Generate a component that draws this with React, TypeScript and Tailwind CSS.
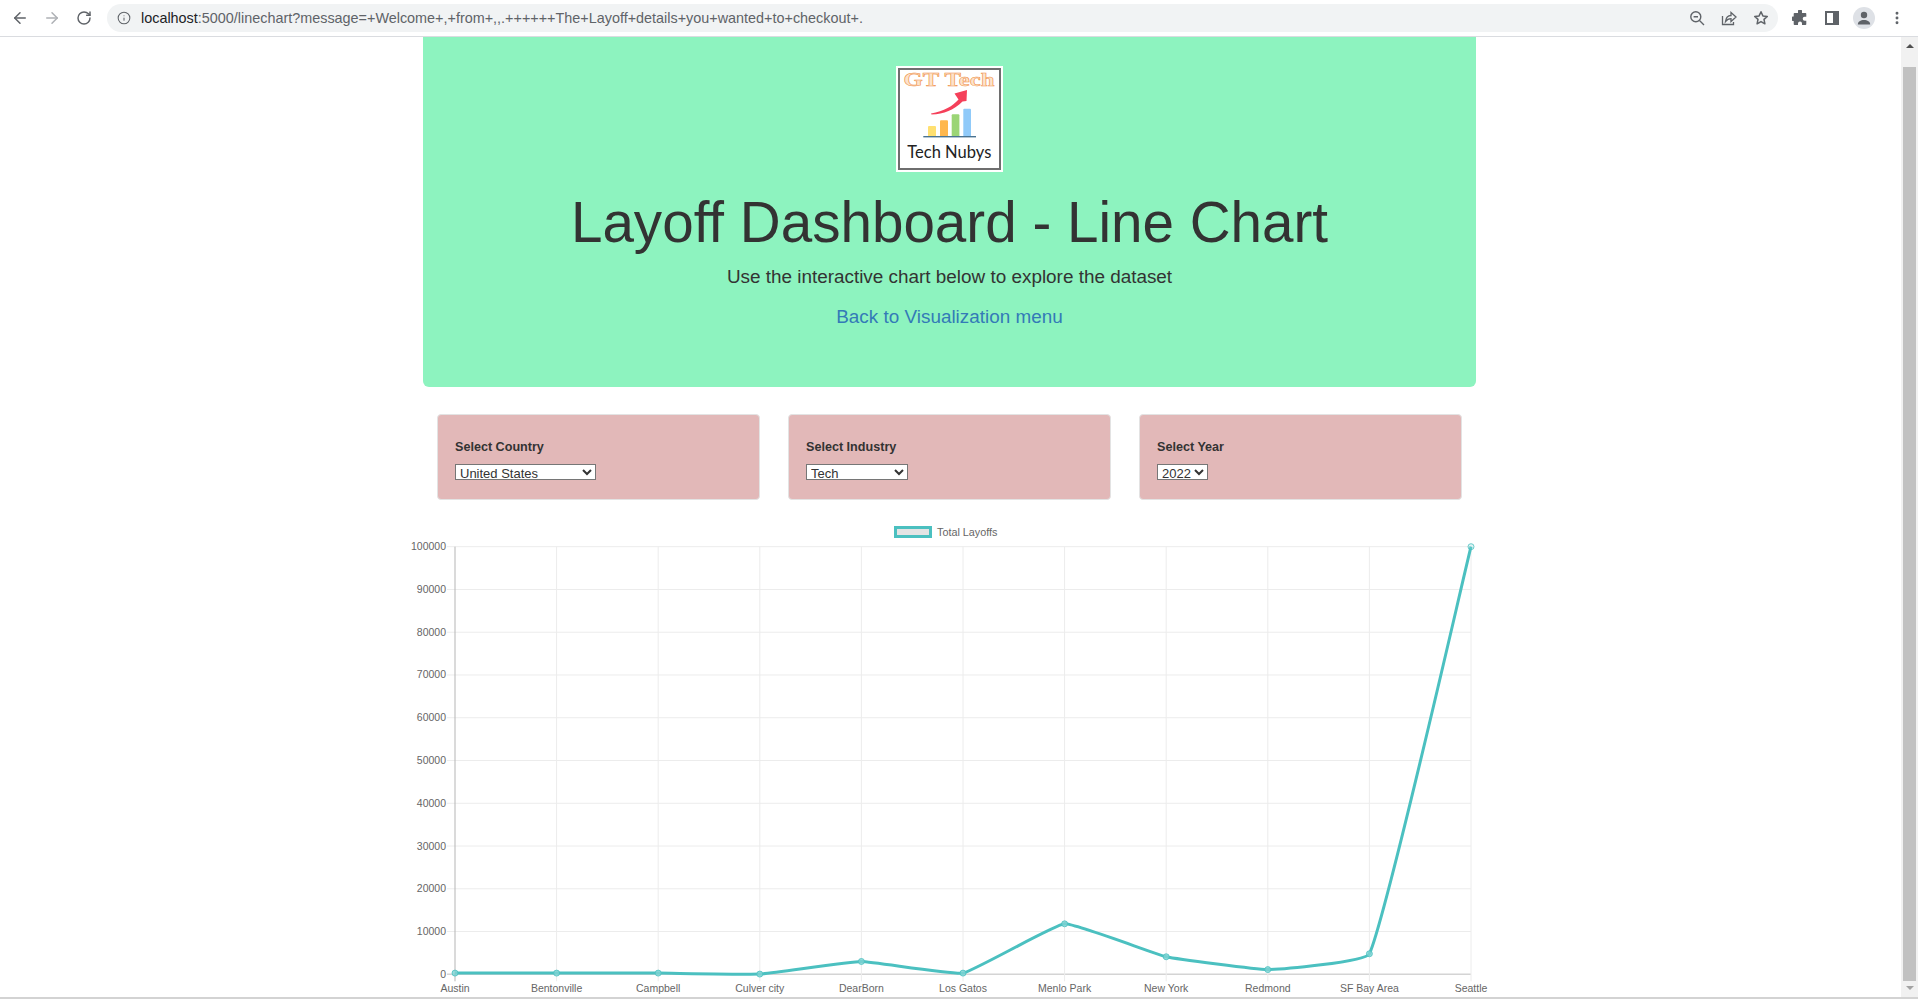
import React from "react";
import { ArrowLeft, ArrowRight, RotateCw, Info, MoreVertical } from "lucide-react";

const labels = ["Austin","Bentonville","Campbell","Culver city","DearBorn","Los Gatos","Menlo Park","New York","Redmond","SF Bay Area","Seattle"];
const values = [280,280,280,50,3000,280,11800,4100,1100,4800,100000];
const X0 = 455, X1 = 1471, Y0 = 974.3, Y1 = 546.7, LEFT = 400, TOP = 515;
const px = (i: number) => X0 + (i * (X1 - X0)) / 10 - LEFT;
const py = (v: number) => Y0 - (v / 100000) * (Y0 - Y1) - TOP;

function spline() {
  const pts = values.map((v, i) => ({ x: px(i), y: py(v) }));
  const t = 0.1;
  const ctrl = pts.map((p, i) => {
    const a = pts[Math.max(i - 1, 0)];
    const b = pts[Math.min(i + 1, pts.length - 1)];
    const d1 = Math.hypot(p.x - a.x, p.y - a.y);
    const d2 = Math.hypot(b.x - p.x, b.y - p.y);
    const s = d1 + d2 || 1;
    const f1 = (d1 / s) * t;
    const f2 = (d2 / s) * t;
    return {
      px: p.x - f1 * (b.x - a.x),
      py: p.y - f1 * (b.y - a.y),
      nx: p.x + f2 * (b.x - a.x),
      ny: p.y + f2 * (b.y - a.y),
    };
  });
  let d = `M${pts[0].x} ${pts[0].y}`;
  for (let i = 1; i < pts.length; i++) {
    d += ` C${ctrl[i - 1].nx} ${ctrl[i - 1].ny} ${ctrl[i].px} ${ctrl[i].py} ${pts[i].x} ${pts[i].y}`;
  }
  return { d, pts };
}

function Chart() {
  const { d, pts } = spline();
  return (
    <svg width="1100" height="484" className="block" style={{ fontFamily: '"Liberation Sans", Arial, sans-serif' }}>
      <rect x="495.5" y="12.5" width="35" height="9" fill="#e4e4e4" stroke="#4bc0c0" strokeWidth="3" />
      <text x="537" y="20.5" fontSize="10.8" fill="#666">Total Layoffs</text>
      {Array.from({ length: 11 }).map((_, i) => {
        const y = py(i * 10000);
        return (
          <g key={i}>
            <line x1={X0 - LEFT - 8} x2={X1 - LEFT} y1={y} y2={y} stroke={i === 0 ? "#d4d4d4" : "#ececec"} strokeWidth={i === 0 ? 1.5 : 1} />
            <text x={X0 - LEFT - 9} y={y + 3.5} textAnchor="end" fontSize="10.5" fill="#666">{i * 10000}</text>
          </g>
        );
      })}
      {labels.map((l, i) => (
        <g key={l}>
          <line x1={px(i)} x2={px(i)} y1={py(100000)} y2={py(0) + 7} stroke={i === 0 ? "#b5b5b5" : "#ececec"} />
          <text x={px(i)} y={py(0) + 17.5} textAnchor="middle" fontSize="10.5" fill="#666">{l}</text>
        </g>
      ))}
      <path d={d} fill="none" stroke="#4bc0c0" strokeWidth="3" />
      {pts.map((p, i) => (
        <circle key={i} cx={p.x} cy={p.y} r="3" fill="#7fd3d3" fillOpacity={i === 10 ? 0.25 : 0.8} stroke="#4bc0c0" strokeOpacity="0.8" strokeWidth="1" />
      ))}
    </svg>
  );
}

function Logo() {
  return (
    <div className="w-[107px] h-[106px] bg-white p-[2px] shrink-0">
      <svg width="103" height="102" viewBox="0 0 103 102" className="block">
        <rect x="1" y="1" width="101" height="100" fill="#fff" stroke="#6e6e6e" strokeWidth="2" />
        <text x="5.5" y="18" fontSize="19" fill="#fde3cb" stroke="#ef8f45" strokeWidth="0.5" textLength="91" lengthAdjust="spacingAndGlyphs" style={{ fontFamily: '"Liberation Serif", serif', fontWeight: 700 }}>GT Tech</text>
        <path d="M33 45.5 C46 43 55 38 60.5 31.5 L56.5 25.5 L69 22 L68.5 33 L64.5 33.5 C56 42 46 46 33.5 46.5 Z" fill="#f5405a" />
        <rect x="30" y="58" width="8" height="10.7" rx="1" fill="#ffe071" />
        <rect x="42" y="52.3" width="8" height="16.4" rx="1" fill="#ffb74d" />
        <rect x="53.7" y="46.3" width="7.7" height="22.4" rx="1" fill="#9bd575" />
        <rect x="65.3" y="40.7" width="7.7" height="28" rx="1" fill="#90caf9" />
        <rect x="25.3" y="68" width="52.7" height="1.4" fill="#4a7391" />
        <text x="9.3" y="90" fontSize="17" fill="#222" textLength="84" lengthAdjust="spacingAndGlyphs" style={{ fontFamily: 'Lato, sans-serif' }}>Tech Nubys</text>
      </svg>
    </div>
  );
}

function Filter({ label, width, value, options }: { label: string; width: string; value: string; options: string[] }) {
  return (
    <div className="w-[323px] h-[86px] bg-[#e2b8b8] rounded-[4px] border border-[#e3e3e3] pl-[17px] pt-[22px]">
      <div className="text-[12.6px] leading-[20px] font-bold text-[#333] mb-[7px]">{label}</div>
      <select defaultValue={value} className={`${width} h-[16px] block bg-white border border-[#767676] text-[13px] leading-[14px] text-[#333] pl-0 py-0`}>
        {options.map((o) => <option key={o}>{o}</option>)}
      </select>
    </div>
  );
}

const chromeIcon = "#5f6368";

export default function App() {
  return (
    <div className="h-[999px] w-[1918px] overflow-hidden flex flex-col bg-white text-[#333]" style={{ fontFamily: '"Liberation Sans", Arial, sans-serif' }}>
      <header className="h-[37px] shrink-0 flex items-center bg-white border-b border-[#dadce0] pl-[11px]">
        <ArrowLeft size={18} strokeWidth={2} className="text-[#5f6368]" />
        <ArrowRight size={18} strokeWidth={2} className="text-[#aeb1b5] ml-[14px]" />
        <RotateCw size={16} strokeWidth={2.2} className="text-[#5f6368] ml-[15px]" />
        <div className="w-[1671px] h-[28px] ml-[15px] bg-[#f1f3f4] rounded-full flex items-center pl-[10px] -mt-[1px] shrink-0">
          <Info size={14} strokeWidth={1.8} className="text-[#5f6368] mr-[10px]" />
          <span className="text-[14.4px] text-[#5f6368] whitespace-nowrap mt-[2px]"><span className="text-[#202124]">localhost</span>:5000/linechart?message=+Welcome+,+from+,,.++++++The+Layoff+details+you+wanted+to+checkout+.</span>
          <div className="ml-auto flex items-center gap-[16px] pr-[9px]">
            <svg width="16" height="16" viewBox="0 0 16 16" fill="none" stroke={chromeIcon} strokeWidth="1.4">
              <circle cx="6.8" cy="6.8" r="5" />
              <path d="M4.6 6.8h4.4M10.5 10.5L15 15" />
            </svg>
            <svg width="16" height="16" viewBox="0 0 16 16" fill="none" stroke={chromeIcon} strokeWidth="1.3">
              <path d="M1.5 6v8.5h11V12" />
              <path d="M4.5 11.5C5 7.5 7.5 5.5 10 5.5V2.5L15 7l-5 4.5V8.7C7.8 8.7 6 9.5 4.5 11.5Z" />
            </svg>
            <svg width="16" height="16" viewBox="0 0 16 16" fill="none" stroke={chromeIcon} strokeWidth="1.5" strokeLinejoin="round">
              <path d="M8 1.8l1.9 4.1 4.4.5-3.3 3 .9 4.4L8 11.6l-3.9 2.2.9-4.4-3.3-3 4.4-.5Z" />
            </svg>
          </div>
        </div>
        <svg width="16" height="16" viewBox="0 0 16 16" className="ml-[14px]" fill={chromeIcon}>
          <path d="M6 1.2a2 2 0 0 1 4 0V3h3.5a.8.8 0 0 1 .8.8v3h-1.6a2 2 0 0 0 0 4h1.6v3.5a.8.8 0 0 1-.8.7H10v-1.4a2 2 0 0 0-4 0V15H2.5a.8.8 0 0 1-.8-.7V11H1a2.2 2.2 0 0 1 0-4.4h.7V3.8a.8.8 0 0 1 .8-.8H6Z" />
        </svg>
        <div className="w-[14px] h-[14px] border-[2px] border-r-[6px] border-[#5f6368] bg-white ml-[17px]" />
        <div className="w-[22px] h-[22px] rounded-full bg-[#dee1e6] flex items-center justify-center ml-[14px]">
          <svg width="14" height="14" viewBox="0 0 14 14" fill={chromeIcon}>
            <circle cx="7" cy="4" r="3.2" />
            <path d="M0.8 13.5c0-3 2.8-4.6 6.2-4.6s6.2 1.6 6.2 4.6Z" />
          </svg>
        </div>
        <MoreVertical size={16} strokeWidth={2.4} className="text-[#5f6368] ml-[14px]" />
      </header>
      <div className="flex-1 min-h-0 flex border-b-[2px] border-[#d3d3d3]">
        <main className="flex-1 min-w-0 overflow-hidden pl-[423px]">
          <section className="w-[1053px] h-[350px] bg-[#8df3bf] rounded-b-[6px] flex flex-col items-center pt-[29px]">
            <Logo />
            <h1 className="text-[56.6px] leading-[63px] mt-[19px] text-[#333]">Layoff Dashboard - Line Chart</h1>
            <p className="text-[18.9px] leading-[28px] mt-[9px]">Use the interactive chart below to explore the dataset</p>
            <a className="text-[18.9px] leading-[28px] mt-[12px] text-[#337ab7]">Back to Visualization menu</a>
          </section>
          <div className="w-[1025px] ml-[14px] mt-[27px] flex justify-between">
            <Filter label="Select Country" width="w-[141px]" value="United States" options={["United States"]} />
            <Filter label="Select Industry" width="w-[102px]" value="Tech" options={["Tech"]} />
            <Filter label="Select Year" width="w-[51px]" value="2022" options={["2022"]} />
          </div>
          <div className="-ml-[23px] mt-[15px]">
            <Chart />
          </div>
        </main>
        <aside className="w-[17px] shrink-0 bg-[#f1f1f1] flex flex-col items-center">
          <div className="h-[30px] w-full flex justify-center pt-[7px]"><div className="w-0 h-0 border-l-[4px] border-r-[4px] border-b-[4px] border-l-transparent border-r-transparent border-b-[#505050]" /></div>
          <div className="w-[13px] h-[914px] bg-[#c1c1c1]" />
          <div className="w-0 h-0 mt-[5px] border-l-[4px] border-r-[4px] border-t-[4px] border-l-transparent border-r-transparent border-t-[#a3a3a3]" />
        </aside>
      </div>
    </div>
  );
}
